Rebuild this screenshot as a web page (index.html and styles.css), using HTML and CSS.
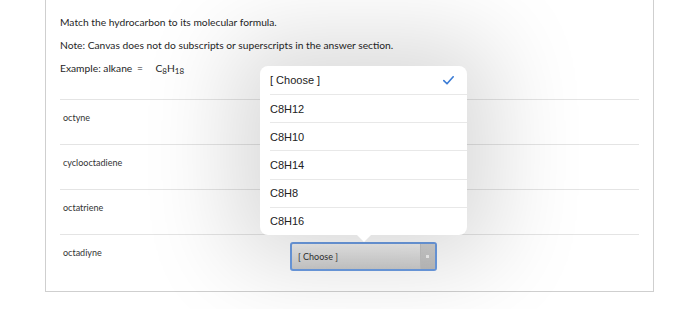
FILE: index.html
```html
<!DOCTYPE html>
<html lang="en">
<head>
    <meta charset="UTF-8">
    <meta name="viewport" content="width=device-width, initial-scale=1.0">
    <title>Matching Question</title>
    <link rel="stylesheet" href="styles.css">
</head>
<body>
    <div class="page">
        <div class="question-card">
            <div class="question-text">
                <p>Match the hydrocarbon to its molecular formula.</p>
                <p>Note: Canvas does not do subscripts or superscripts in the answer section.</p>
                <p>Example: alkane <span class="equals">=</span> <span class="formula">C<sub>8</sub>H<sub>18</sub></span></p>
            </div>

            <div class="answers">
                <div class="answer-row">
                    <span class="answer-label">octyne</span>
                    <div class="select-wrap covered">
                        <div class="fake-select"><span>[ Choose ]</span><span class="select-arrow"></span></div>
                    </div>
                </div>
                <div class="answer-row">
                    <span class="answer-label">cyclooctadiene</span>
                    <div class="select-wrap covered">
                        <div class="fake-select"><span>[ Choose ]</span><span class="select-arrow"></span></div>
                    </div>
                </div>
                <div class="answer-row">
                    <span class="answer-label">octatriene</span>
                    <div class="select-wrap covered">
                        <div class="fake-select"><span>[ Choose ]</span><span class="select-arrow"></span></div>
                    </div>
                </div>
                <div class="answer-row">
                    <span class="answer-label">octadiyne</span>
                    <div class="select-wrap">
                        <div class="fake-select focused"><span>[ Choose ]</span><span class="select-arrow"></span></div>

                        <!-- open dropdown -->
                        <ul class="option-popup">
                            <li class="selected">
                                <span>[ Choose ]</span>
                                <svg class="check" width="11" height="9" viewBox="0 0 11 9">
                                    <polyline points="0.8,4.6 4,7.8 10.2,0.8" fill="none" stroke="#3a7bd5" stroke-width="1.6" stroke-linecap="round" stroke-linejoin="round"/>
                                </svg>
                            </li>
                            <li><span>C8H12</span></li>
                            <li><span>C8H10</span></li>
                            <li><span>C8H14</span></li>
                            <li><span>C8H8</span></li>
                            <li><span>C8H16</span></li>
                        </ul>
                    </div>
                </div>
            </div>
        </div>
    </div>
</body>
</html>
```

FILE: styles.css
```css
body {
    margin: 0;
    padding: 0;
    font-family: Lato, "Open Sans", sans-serif;
    background-color: #fff;
    color: #2d3b45;
}

.page {
    padding: 0 46px 18px 45px;
}

/* Card */
.question-card {
    border: 1px solid #cfcfcf;
    border-top: none;
    padding: 11px 14px 12px 14px;
}

.question-text {
    margin-bottom: 19px;
}

.question-text p {
    margin: 0;
    font-size: 10.25px;
    line-height: 23px;
    color: #262626;
}

.equals {
    margin: 0 7px 0 2px;
}

.formula {
    margin-left: 3px;
}

.formula sub {
    font-size: 8px;
    vertical-align: -2px;
    line-height: 0;
}

/* Answer rows */
.answer-row {
    display: flex;
    align-items: flex-start;
    box-sizing: border-box;
    height: 45px;
    padding-top: 7px;
    border-top: 1px solid #e4e4e4;
}

.answer-label {
    width: 227px;
    padding-left: 3px;
    font-size: 9px;
    line-height: 22px;
    color: #333;
}

.select-wrap {
    position: relative;
}

/* the popup sits over these ones */
.select-wrap.covered {
    visibility: hidden;
}

.fake-select {
    display: flex;
    justify-content: space-between;
    align-items: stretch;
    box-sizing: border-box;
    width: 147px;
    height: 29px;
    border: 1px solid #b5b5b5;
    border-radius: 3px;
    background: linear-gradient(#f2f2f2, #cbcbcb);
    font-size: 9px;
    color: #333;
}

.fake-select span:first-child {
    align-self: center;
    padding-left: 8px;
}

.fake-select.focused {
    border: 2px solid #6d9de3;
}

.fake-select.focused span:first-child {
    padding-left: 6px;
}

.select-arrow {
    position: relative;
    width: 14px;
    background: linear-gradient(#d2d2d2, #bdbdbd);
    border-left: 1px solid #c4c4c4;
}

.select-arrow::after {
    content: "";
    position: absolute;
    left: 5px;
    top: 11px;
    width: 3px;
    height: 3px;
    background-color: #f4f4f4;
}

/* Dropdown popup */
.option-popup {
    position: absolute;
    left: -30px;
    bottom: calc(100% + 7px);
    width: 207px;
    margin: 0;
    padding: 0;
    list-style-type: none;
    background-color: #fff;
    border-radius: 8px;
    box-shadow: 0 0 90px 28px rgba(0, 0, 0, 0.15);
    font-family: "Liberation Sans", Arial, sans-serif;
    font-size: 11px;
    color: #222;
    z-index: 2;
}

.option-popup::after {
    content: "";
    position: absolute;
    top: 100%;
    left: 97px;
    border-left: 7px solid transparent;
    border-right: 7px solid transparent;
    border-top: 7px solid #fff;
}

.option-popup li {
    display: flex;
    justify-content: space-between;
    align-items: center;
    box-sizing: border-box;
    height: 28.2px;
    margin-left: 10px;
    padding-right: 13px;
    border-top: 1px solid #e8e8e8;
}

.option-popup li.selected {
    height: 28px;
    border-top: none;
}

.check {
    display: block;
}
```
